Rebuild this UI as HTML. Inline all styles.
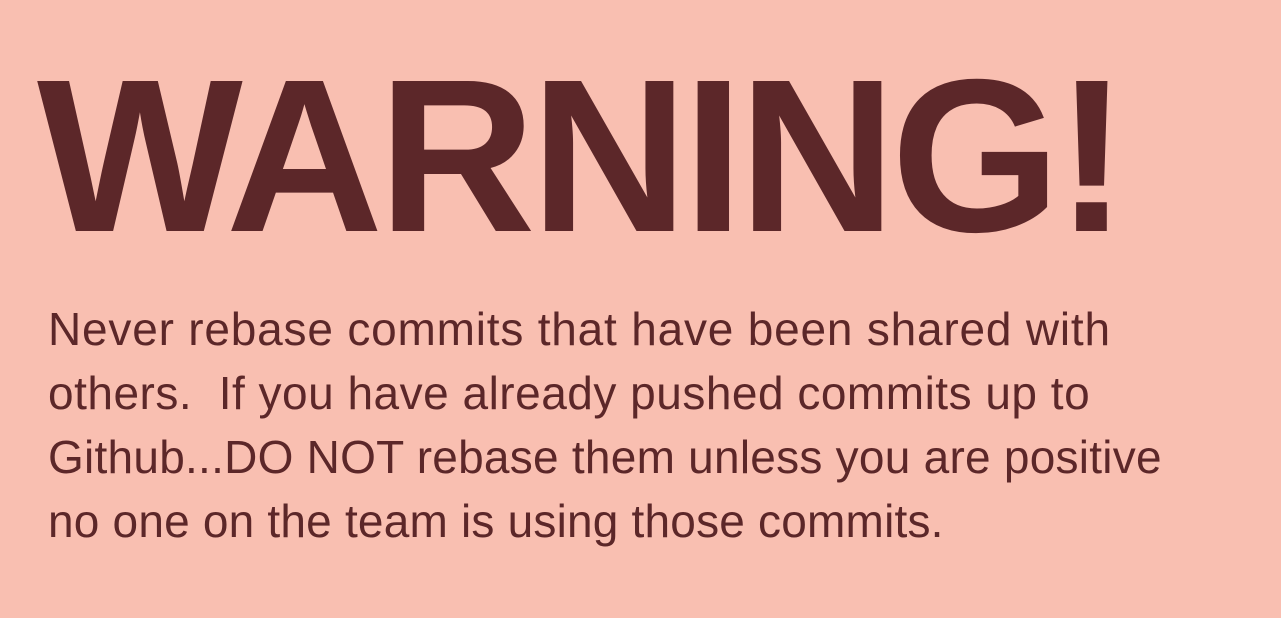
<!DOCTYPE html>
<html><head><meta charset="utf-8"><style>
html,body{margin:0;padding:0;}
body{width:1281px;height:618px;background:#f9bfb1;position:relative;overflow:hidden;font-family:"Liberation Sans",sans-serif;color:#5c2729;}
h1{position:absolute;left:37px;top:48px;margin:0;font-size:218px;line-height:218px;font-weight:bold;letter-spacing:-5px;white-space:nowrap;}
.p{position:absolute;left:48px;top:297px;font-size:46px;line-height:64px;white-space:nowrap;}
.p div{height:64px;}
</style></head><body>
<h1>WARNING!</h1>
<div class="p">
<div style="letter-spacing:0.8px">Never rebase commits that have been shared with</div>
<div style="letter-spacing:0.5px">others.&nbsp; If you have already pushed commits up to</div>
<div style="letter-spacing:0.25px">Github...DO NOT rebase them unless you are positive</div>
<div style="letter-spacing:0.2px">no one on the team is using those commits.</div>
</div>
</body></html>
